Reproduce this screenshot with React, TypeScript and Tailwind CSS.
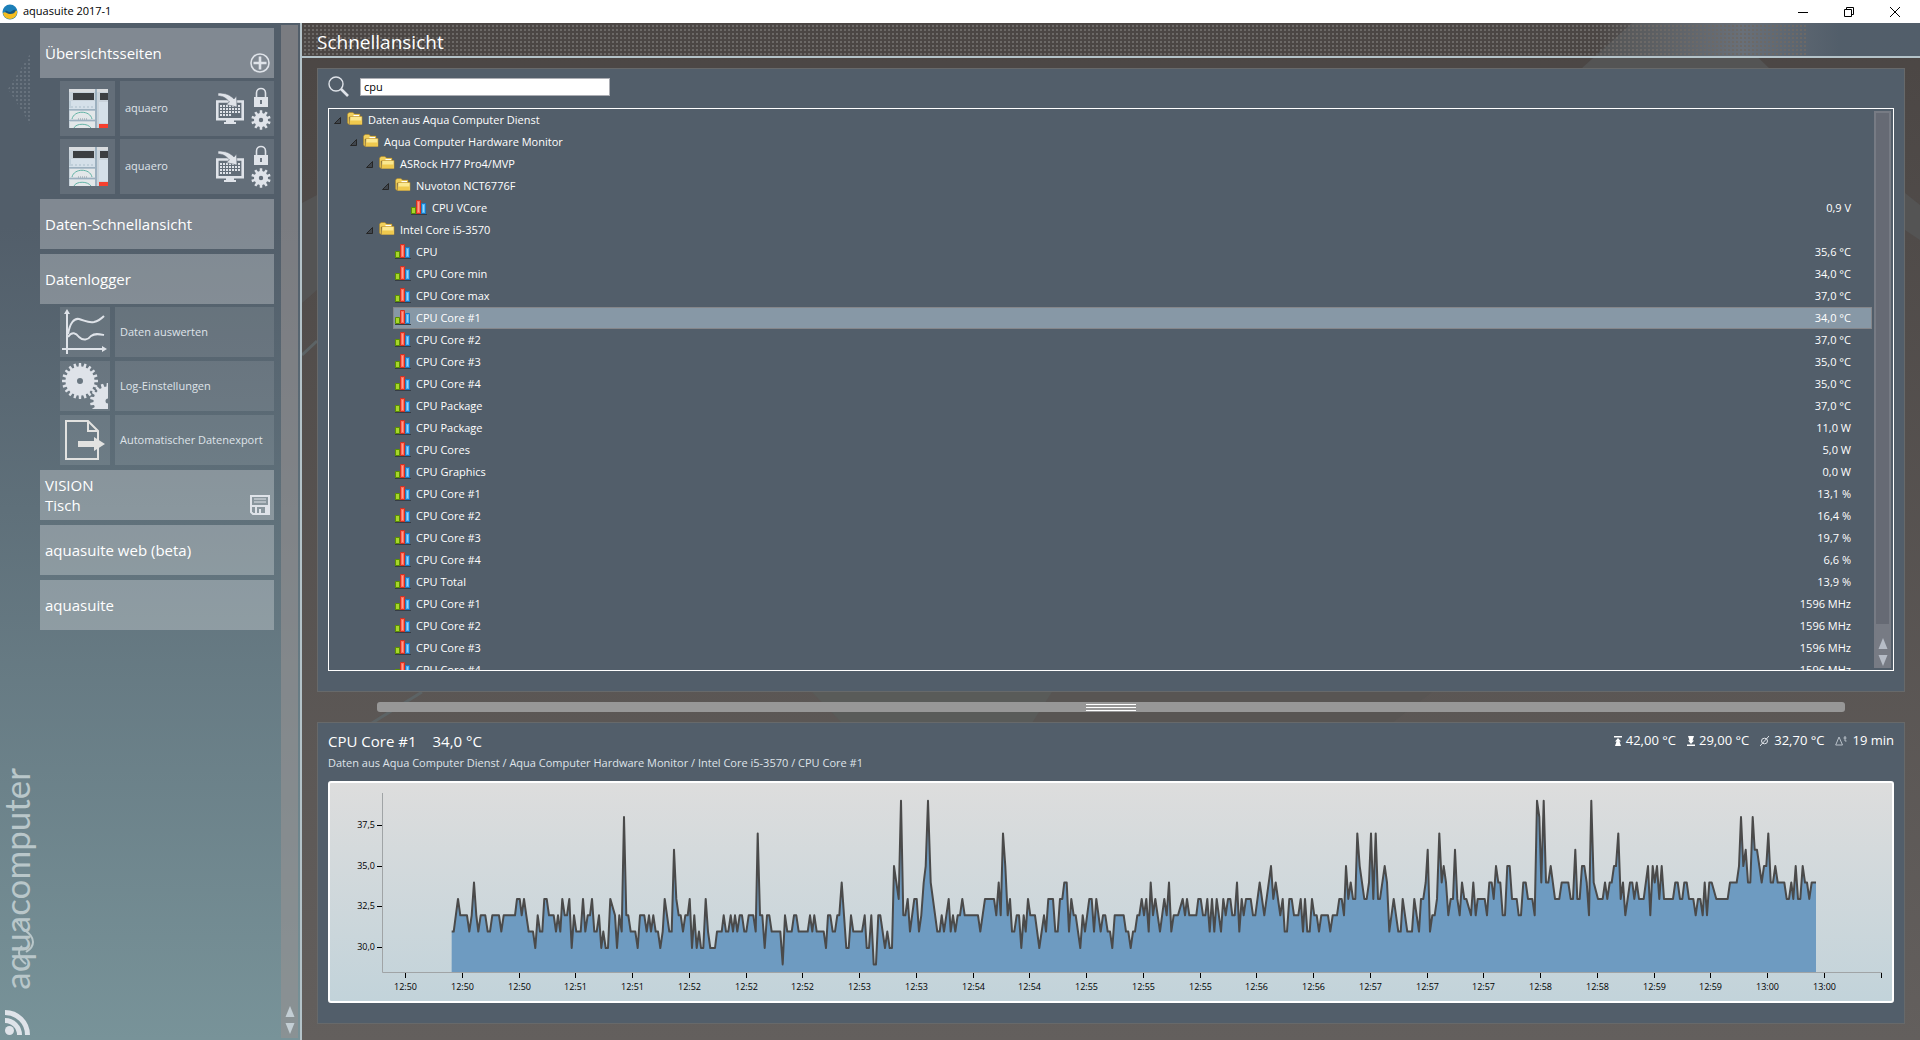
import { useState } from 'react';
import clsx from 'clsx';

interface TreeNode {
  level: number;
  name: string;
  value?: string;
}

const treeNodes: TreeNode[] = [
  { level: 0, name: 'Daten aus Aqua Computer Dienst' },
  { level: 1, name: 'Aqua Computer Hardware Monitor' },
  { level: 2, name: 'ASRock H77 Pro4/MVP' },
  { level: 3, name: 'Nuvoton NCT6776F' },
  { level: 4, name: 'CPU VCore', value: '0,9 V' },
  { level: 2, name: 'Intel Core i5-3570' },
  { level: 3, name: 'CPU', value: '35,6 °C' },
  { level: 3, name: 'CPU Core min', value: '34,0 °C' },
  { level: 3, name: 'CPU Core max', value: '37,0 °C' },
  { level: 3, name: 'CPU Core #1', value: '34,0 °C' },
  { level: 3, name: 'CPU Core #2', value: '37,0 °C' },
  { level: 3, name: 'CPU Core #3', value: '35,0 °C' },
  { level: 3, name: 'CPU Core #4', value: '35,0 °C' },
  { level: 3, name: 'CPU Package', value: '37,0 °C' },
  { level: 3, name: 'CPU Package', value: '11,0 W' },
  { level: 3, name: 'CPU Cores', value: '5,0 W' },
  { level: 3, name: 'CPU Graphics', value: '0,0 W' },
  { level: 3, name: 'CPU Core #1', value: '13,1 %' },
  { level: 3, name: 'CPU Core #2', value: '16,4 %' },
  { level: 3, name: 'CPU Core #3', value: '19,7 %' },
  { level: 3, name: 'CPU Core #4', value: '6,6 %' },
  { level: 3, name: 'CPU Total', value: '13,9 %' },
  { level: 3, name: 'CPU Core #1', value: '1596 MHz' },
  { level: 3, name: 'CPU Core #2', value: '1596 MHz' },
  { level: 3, name: 'CPU Core #3', value: '1596 MHz' },
  { level: 3, name: 'CPU Core #4', value: '1596 MHz' },
];

const indent = ['pl-0', 'pl-4', 'pl-8', 'pl-12', 'pl-16'];

// Recorded temperatures as "time:value" pairs, split in blocks with a start offset
const blocks = [
  {
    start: 0,
    points:
      '395:31 401:31 414:33 421:32 441:32 448:31 455:32 462:34 469:32 475:31 482:32 496:32 503:31 510:31 517:32 537:32 544:31 551:32 585:32 591:33 599:33 605:32 612:33 619:32 626:31 639:31 646:30 653:32 660:31 667:31 673:33 680:33 687:32 701:32 708:31 714:32 721:31 727:33 734:32 741:32 748:33 755:30 762:32 769:31 782:31 789:33 796:31 803:32 810:32 816:33 823:31 830:31 837:32 844:30 850:31 857:30 864:30 871:33 885:32 891:30 898:32 905:31 912:38 919:32 925:32 932:31 946:31 953:30 960:32 973:32 980:31 987:32 993:31 1000:32 1007:31 1014:31 1021:30 1028:31 1034:33 1048:31 1055:31 1062:36 1069:33 1076:32 1082:32 1089:31 1096:32 1103:32 1109:33 1116:30 1123:32 1130:30 1137:31 1143:30 1150:30 1157:33 1164:31 1171:30 1185:30 1191:31 1205:31 1211:32 1218:31 1225:31 1232:32 1239:31 1245:32 1252:31 1259:32',
  },
  {
    start: 1260,
    points:
      '6:32 13:31 19:31 26:32 40:32 47:31 53:37 60:32 67:32 74:30 81:32 88:32 95:31 121:31 128:29 135:32 142:31 155:31 162:32 169:32 176:31 203:31 210:32 217:31 223:32 230:31 251:31 258:30 264:32 271:32 278:31 285:31 292:32 298:32 305:34 312:32 319:30 326:30 333:32 340:31 366:31 374:32 380:30 387:30 394:32 401:29 408:29 415:32 421:32 435:30 442:31 449:30 456:30 462:35 476:33 483:39 490:32 496:32 503:33 510:31 523:33 530:33 537:31 544:32 551:34 557:35 564:39 572:34 592:31 599:31 605:32 612:31 626:33 632:31 639:32 646:31 653:32 660:32 667:33 674:32 714:32 721:31 735:33 762:33 769:32 776:34 782:32 789:37 796:35 803:32 810:33 816:31 823:31 830:32 837:32 844:30 851:32 857:31 864:33 871:32 885:32 898:30 912:32 918:31 925:33 939:33 946:31 953:31 960:33 967:33 973:34 980:34 987:31 994:33 1001:32 1007:32 1021:30 1028:32 1035:31 1048:33 1055:33 1062:31 1069:33 1082:31 1089:32 1096:32 1103:31 1110:31 1117:30 1124:32 1151:32 1158:31 1165:31 1172:30 1179:31 1185:31 1192:32 1198:32 1205:33 1212:32 1219:33 1226:31 1232:34 1239:32 1246:33',
  },
  {
    start: 2520,
    points:
      '0:31 13:33 20:32 27:34 34:31 41:32 54:32 68:33 75:32 81:33 88:32 109:32 115:33 122:33 129:32 136:32 142:33 149:31 156:33 163:31 170:33 183:31 190:33 197:32 204:33 211:33 217:32 224:32 231:34 238:31 245:33 251:32 258:33 272:33 279:32 286:32 299:34 313:32 333:35 340:33 347:34 361:32 368:33 374:31 381:31 388:33 395:33 402:32 415:32 422:33 429:31 435:33 442:31 449:31 456:33 463:32 470:32 477:31 484:32 504:32 511:31 518:32 531:32 538:33 545:33 552:32 558:35 565:33 572:34 579:33 586:33 592:37 599:35 613:33 620:33 627:34 633:37 640:33 647:37 654:33 660:33 674:35 681:34 688:31 701:33 715:31 722:31 728:33 742:31 756:31 763:33 777:31 783:33 790:33 797:34 803:36 810:31 817:32 824:32 831:33 838:37 845:34 851:35 858:34 865:32 872:33 879:33 885:36 892:33 899:32 906:34 913:33 919:33 933:32 940:34 947:32 953:33 974:33 981:32 988:34 995:34 1001:33 1008:35 1015:34 1021:34 1028:32 1035:32 1042:35 1049:35 1056:33 1070:33 1076:32 1083:32 1090:34 1097:34 1104:33 1117:33 1124:32 1131:39 1138:38 1144:34 1151:39 1158:34 1165:34 1172:35',
  },
  {
    start: 3660,
    points:
      '45:33 58:33 65:34 85:34 92:33 99:33 106:36 112:33 119:33 126:35 133:35 140:34 147:32 154:39 161:34 174:33 188:33 195:34 202:33 209:34 215:34 222:35 228:35 235:37 242:33 249:34 256:32 270:34 277:34 283:33 290:34 297:33 311:33 324:35 331:32 338:35 344:34 351:35 358:33 365:35 372:33 399:33 406:34 413:34 420:33 427:33 433:34 440:34 447:33 460:33 467:32 474:33 481:33 488:32 494:34 501:32 508:34 515:34 529:33 563:33 570:34 590:34 597:35 603:38 610:35 617:36 624:34 631:34 638:38 644:36 651:36 665:34 672:35 679:35 685:37 692:34 699:34 706:35 713:34 733:34 740:33 747:33 754:34 760:33 767:35 774:33 781:33 788:35 795:34 801:34 808:33 815:34 828:34',
  },
];

const BASELINE = 189;
const toX = (time: number) => time / 3 - 10;
const toY = (temp: number) => 165 - (temp - 30) * 16.37;

const samples = blocks.flatMap(({ start, points }) =>
  points.split(' ').map((pair) => {
    const [time, temp] = pair.split(':').map(Number);
    return { x: toX(start + time), y: toY(temp) };
  })
);
const linePoints = samples.map((s) => `${s.x.toFixed(1)},${s.y.toFixed(1)}`).join(' ');
const areaPoints = `${samples[0].x},${BASELINE} ${linePoints} ${samples[samples.length - 1].x},${BASELINE}`;

const yTicks = [
  { label: '37,5', y: 42 },
  { label: '35,0', y: 83 },
  { label: '32,5', y: 123 },
  { label: '30,0', y: 164 },
];

const timeLabels = [
  '12:50', '12:50', '12:50', '12:51', '12:51', '12:52', '12:52', '12:52', '12:53',
  '12:53', '12:54', '12:54', '12:55', '12:55', '12:55', '12:56', '12:56', '12:57',
  '12:57', '12:57', '12:58', '12:58', '12:59', '12:59', '13:00', '13:00', '',
];

function gearPath(cx: number, cy: number, teeth: number, outer: number, inner: number, hole: number) {
  const step = (Math.PI * 2) / teeth;
  const at = (r: number, a: number) => `${(cx + r * Math.cos(a)).toFixed(2)} ${(cy + r * Math.sin(a)).toFixed(2)}`;
  let d = '';
  for (let i = 0; i < teeth; i++) {
    const a = i * step - Math.PI / 2;
    d += `${i === 0 ? 'M' : 'L'}${at(inner, a - step * 0.3)}L${at(outer, a - step * 0.2)}L${at(outer, a + step * 0.2)}L${at(inner, a + step * 0.3)}`;
  }
  return `${d}Z M${cx - hole} ${cy}a${hole} ${hole} 0 1 0 ${hole * 2} 0a${hole} ${hole} 0 1 0 ${-hole * 2} 0Z`;
}

function AppLogo() {
  return (
    <svg className="w-4 h-4" viewBox="0 0 16 16">
      <circle cx="8" cy="8" r="7.5" fill="#1c7fb8" />
      <path d="M1 9c2-2 4 1 7 0s4-4 7-2c.6 4-2.500 8-7 8-4 0-6.500-3-7-6Z" fill="#f5bd20" />
      <path d="M3 7c2-1 3 1 5 1s3-3 6-2c-1 3-3 4-6 4-2 0-4-1-5-3Z" fill="#16577f" />
    </svg>
  );
}

function FolderIcon() {
  return (
    <svg className="w-4 h-4 shrink-0" viewBox="0 0 16 16">
      <path d="M.5 2 2 .5h4L7.500 2H13v3H2v7.500L.5 11Z" fill="#f0cf5c" stroke="#a97f1c" strokeWidth=".5" />
      <path d="M6.500 3H12v1.500H6.500Z" fill="#fff" />
      <path d="M3 4.500h12v8H2.500Z" fill="#fbe88f" stroke="#c1922a" strokeWidth=".6" />
      <path d="M3 8.500h11.700v3.700H3Z" fill="#efc94e" />
    </svg>
  );
}

function BarsIcon() {
  return (
    <svg className="w-4 h-4 shrink-0" viewBox="0 0 16 16">
      <path d="M0 14.500h16" stroke="#353c45" />
      <path d="M.5 7.500h4v6h-4Z" fill="#a7d62c" stroke="#5c8f00" />
      <path d="M5.500.5h4v13h-4Z" fill="#ff6f5c" stroke="#d8301f" />
      <path d="M7.500 2v10" stroke="#ff9d8e" />
      <path d="M10.500 3.500h4v10h-4Z" fill="#55b6f2" stroke="#1878c4" />
      <path d="M12.500 5v7" stroke="#93d4fb" />
    </svg>
  );
}

function ScrollArrows() {
  return (
    <svg className="w-[10px] h-7" viewBox="0 0 10 28" fill="currentColor">
      <path d="M5 0 9.500 11H.5Z" />
      <path d="M5 28 .5 17h9Z" />
    </svg>
  );
}

function PageThumbnail() {
  return (
    <svg className="w-[39px] h-[39px]" viewBox="0 0 39 39">
      <path d="M0 0h39v39H0Z" fill="#c9d3db" />
      <path d="M0 0h39v3H0Z" fill="#d9dcdf" />
      <path d="M4 4h21v7H4ZM31 4h8v7h-8Z" fill="#3c3f42" />
      <path d="M0 12h26v9H0ZM30 13h9v21h-9Z" fill="#d5e0e9" />
      <path d="M26 0h2v39h-2ZM0 20h26v1.500H0ZM0 31h26v1H0Z" fill="#9cb0bf" />
      <path d="M1 22h25v8H1ZM1 33h25v6H1Z" fill="#e3e7e9" />
      <path d="M3 30c2-9 18-9 20 0M5 39c2-5 14-5 17 0" fill="none" stroke="#63b3a6" />
      <path d="M9 30h9" stroke="#8c9aa4" strokeDasharray="1 1" />
      <path d="M1 12v7M3 17v2M7 17v2M11 17v2M15 17v2M19 17v2M23 17v2" stroke="#9cb0bf" strokeWidth=".7" />
      <path d="M30 35h9v4h-9Z" fill="#f5402f" />
    </svg>
  );
}

function DesktopIcon() {
  return (
    <svg className="w-7 h-8" viewBox="0 0 28 32">
      <path d="M1.300 8.500h25.400v17.700H1.300Z" fill="none" stroke="#dfe3e9" strokeWidth="2.600" />
      <path d="M10 26h8v3h2v2H8v-2h2Z" fill="#dfe3e9" />
      <path d="M4 13h20M4 16h20M4 19h20M4 22h12" stroke="#dfe3e9" strokeWidth="2" strokeDasharray="2 1" />
      <path d="M2 0c8 0 12 2 16 6l2.500-3 .5 11-11-2.500L13.500 9C10 5 7 3 2 3Z" fill="#dfe3e9" stroke="#646f7b" strokeWidth=".6" />
    </svg>
  );
}

function LockIcon() {
  return (
    <svg className="w-4 h-5" viewBox="0 0 16 20">
      <path d="M3.500 10V6c0-6 9-6 9 0v4" fill="none" stroke="#dfe3e9" strokeWidth="1.600" />
      <path d="M1 10h14v10H1Z" fill="#dfe3e9" />
      <path d="M8 13v4" stroke="#5f6975" strokeWidth="1.800" />
    </svg>
  );
}

function GearIcon() {
  return (
    <svg className="w-5 h-5" viewBox="0 0 20 20">
      <path d={gearPath(10, 10, 10, 9.8, 7, 2.2)} fill="#dfe3e9" fillRule="evenodd" />
    </svg>
  );
}

function CurvesIcon() {
  return (
    <svg className="w-[46px] h-[46px]" viewBox="0 0 46 46" fill="none" stroke="#dfe3e9" strokeWidth="2">
      <path d="M5 45V4M0 40h42" />
      <path d="M5 0 8 5H2ZM45 40l-5-3v6Z" fill="#dfe3e9" stroke="none" />
      <path d="M6 25C8 14 12 9 17 10c7 2 9 4 15 3 5-1 7-3 10-6" />
      <path d="M6 28c4-6 8-4 11 0 4 4 9 3 12-1 4-3 8-2 13-1" />
    </svg>
  );
}

function GearsIcon() {
  return (
    <svg className="w-[46px] h-[46px]" viewBox="0 0 46 46" fill="#dfe3e9" fillRule="evenodd">
      <path d={gearPath(18, 18, 20, 18, 14.5, 3)} />
      <path d={gearPath(46, 38, 18, 18, 14.5, 2.5)} />
    </svg>
  );
}

function ExportIcon() {
  return (
    <svg className="w-[46px] h-[46px]" viewBox="0 0 46 46">
      <path d="M4 4h22l10 10v28H4ZM26 4v10h10" fill="none" stroke="#e2e2e0" strokeWidth="2" />
      <path d="M16 24h16v-4l11 7-11 7v-4H16Z" fill="#e2e2e0" />
    </svg>
  );
}

function SaveIcon() {
  return (
    <svg className="w-5 h-5" viewBox="0 0 20 20">
      <path d="M1 1h18v18H3l-2-2Z" fill="none" stroke="#dfe3e9" strokeWidth="2" />
      <path d="M2 10h16v2H2ZM5 12h2v7H5ZM9 14h2v4H9ZM15 12h3v7h-3Z" fill="#dfe3e9" />
      <path d="M4 4h12M4 7h12" stroke="#dfe3e9" />
    </svg>
  );
}

function NavItem({ children, action }: { children: React.ReactNode; action?: React.ReactNode }) {
  return (
    <div className="h-[50px] flex bg-white/27 text-white">
      <button className="flex-1 pl-[5px] pb-px text-left text-[15px] leading-5">{children}</button>
      {action && <div className="self-end flex pr-1 pb-[5px]">{action}</div>}
    </div>
  );
}

function OverviewPage() {
  return (
    <div className="h-[55px] ml-5 flex gap-[5px]">
      <div className="w-[55px] shrink-0 flex items-center justify-center pl-0.5 bg-white/10">
        <PageThumbnail />
      </div>
      <div className="flex-1 flex items-center pl-[5px] pr-[3px] bg-white/10">
        <button className="flex-1 h-full text-left text-[11px] text-[#dfe3e9]">aquaero</button>
        <button className="mr-[7px]" aria-label="Desktop">
          <DesktopIcon />
        </button>
        <div className="flex flex-col items-center gap-[3px]">
          <button aria-label="Sperren"><LockIcon /></button>
          <button aria-label="Einstellungen"><GearIcon /></button>
        </div>
      </div>
    </div>
  );
}

function LoggerItem({ icon, label }: { icon: React.ReactNode; label: string }) {
  return (
    <button className="h-[50px] ml-5 flex gap-[5px] text-left text-[11px] text-[#dfe3e9]">
      <span className="w-[50px] h-full shrink-0 flex items-center justify-center bg-white/10">{icon}</span>
      <span className="flex-1 h-full flex items-center pl-[5px] bg-white/10 whitespace-nowrap">{label}</span>
    </button>
  );
}

function Sidebar() {
  return (
    <aside className="w-[302px] shrink-0 flex border-r-2 border-[#b4c3c9] bg-linear-to-b from-[#525e6a] from-20% to-[#789399]">
      <div className="w-10 shrink-0 flex flex-col justify-between pt-7 pb-[5px]">
        <svg className="w-6 h-[76px] ml-2" viewBox="0 0 24 76">
          <defs>
            <pattern id="arrowDots" width="4" height="4" patternUnits="userSpaceOnUse">
              <path d="M0 0h2v2H0Z" fill="#67727d" />
            </pattern>
          </defs>
          <path d="M0 38 24 0v76Z" fill="url(#arrowDots)" />
        </svg>
        <div className="flex flex-col gap-5">
          <div className="relative self-start">
            <span className="block [writing-mode:vertical-rl] rotate-180 font-[Lato,sans-serif] text-[35px] leading-8 text-[#b9c7ca]">
              aquacomputer
            </span>
            {/* Swash joining the letters of the brand name */}
            <svg className="absolute left-0 bottom-0 w-9 h-[90px]" viewBox="0 0 36 90" fill="none" stroke="#b9c7ca" strokeWidth="2">
              <path d="M26 64C20 60 16 52 22 46M16 20c4 10 17 12 17 22 0 6-4 8-7 10" />
            </svg>
          </div>
          <svg className="w-[25px] h-[25px] ml-[5px]" viewBox="0 0 25 25">
            <circle cx="4.500" cy="20.500" r="4.500" fill="#dfe3e9" />
            <path d="M0 10.500A14.500 14.500 0 0 1 14.500 25M0 2.500A22.500 22.500 0 0 1 22.500 25" fill="none" stroke="#dfe3e9" strokeWidth="5" />
          </svg>
        </div>
      </div>
      <nav className="flex-1 flex flex-col gap-[5px] pt-[5px]">
        <NavItem
          action={
            <button aria-label="Hinzufügen">
              <svg className="w-5 h-5" viewBox="0 0 20 20" fill="none" stroke="#dfe3e9">
                <circle cx="10" cy="10" r="9" strokeWidth="1.600" />
                <path d="M10 3.500v13M3.500 10h13" strokeWidth="2.600" />
              </svg>
            </button>
          }
        >
          Übersichtsseiten
        </NavItem>
        <div className="flex flex-col gap-[3px] -mt-0.5">
          <OverviewPage />
          <OverviewPage />
        </div>
        <NavItem>Daten-Schnellansicht</NavItem>
        <NavItem>Datenlogger</NavItem>
        <div className="flex flex-col gap-1 -mt-0.5">
          <LoggerItem icon={<CurvesIcon />} label="Daten auswerten" />
          <LoggerItem icon={<GearsIcon />} label="Log-Einstellungen" />
          <LoggerItem icon={<ExportIcon />} label="Automatischer Datenexport" />
        </div>
        <NavItem action={<button aria-label="Speichern"><SaveIcon /></button>}>
          VISION
          <br />
          Tisch
        </NavItem>
        <NavItem>aquasuite web (beta)</NavItem>
        <NavItem>aquasuite</NavItem>
      </nav>
      <div className="w-[17px] ml-[7px] mr-0.5 mt-0.5 mb-0.5 flex items-end justify-center pb-1 bg-[#969191]/60 text-[#c3ced4]">
        <ScrollArrows />
      </div>
    </aside>
  );
}

function TreeRow({ node, selected, onSelect }: { node: TreeNode; selected: boolean; onSelect: () => void }) {
  return (
    <li className={clsx('flex h-[22px]', indent[node.level])}>
      <span className="w-4 shrink-0 flex items-center pl-[5px]">
        {!node.value && (
          <svg className="w-[7px] h-[7px]" viewBox="0 0 7 7">
            <path d="M6.500.5v6h-6Z" fill="#40464d" stroke="#262626" />
          </svg>
        )}
      </span>
      <button
        onClick={onSelect}
        className={clsx(
          'flex-1 flex items-center gap-[5px] pl-px pr-5 border text-left text-[11px] text-white',
          selected ? 'bg-[#8798a6] border-[#85868a]' : 'border-transparent'
        )}
      >
        {node.value ? <BarsIcon /> : <FolderIcon />}
        <span className="flex-1">{node.name}</span>
        <span>{node.value}</span>
      </button>
    </li>
  );
}

function HistoryChart() {
  return (
    <div className="border-2 border-white rounded-[3px] bg-linear-to-b from-[#dddddd] to-[#c2d3da]">
      <svg className="block w-full" viewBox="0 0 1562 218" fontSize="9" fill="#000">
        <polygon points={areaPoints} fill="#6e9bc1" />
        <polyline points={linePoints} fill="none" stroke="#4a4a4a" strokeWidth="2" strokeLinejoin="round" />
        <path d="M52.500 10v179.500H1552" fill="none" stroke="#a0a4a6" />
        {yTicks.map((tick) => (
          <g key={tick.label}>
            <path d={`M47 ${tick.y + 0.5}h5`} stroke="#000" />
            <text x="45" y={tick.y + 3} textAnchor="end">{tick.label}</text>
          </g>
        ))}
        {timeLabels.map((label, i) => {
          const x = Math.round(75 + i * 56.75) + 0.5;
          return (
            <g key={i}>
              <path d={`M${x} 190v5`} stroke="#000" />
              <text x={x} y="207" textAnchor="middle">{label}</text>
            </g>
          );
        })}
      </svg>
    </div>
  );
}

function Stats() {
  return (
    <div className="flex items-center gap-[11px] text-[13px] text-white">
      <span className="flex items-center gap-1">
        <svg className="w-2 h-[10px]" viewBox="0 0 8 10" fill="#fff">
          <path d="M0 0h8v1.500H0ZM4 2l3 3.500H5.500L7 10H1l1.500-4.500H1Z" />
        </svg>
        42,00 °C
      </span>
      <span className="flex items-center gap-1">
        <svg className="w-2 h-[10px]" viewBox="0 0 8 10" fill="#fff">
          <path d="M0 8.500h8V10H0ZM4 8 1 4.500h1.500L1 0h6L5.500 4.500H7Z" />
        </svg>
        29,00 °C
      </span>
      <span className="flex items-center gap-[5px]">
        <svg className="w-[9px] h-[10px]" viewBox="0 0 9 10" fill="none" stroke="#dfe3e9">
          <ellipse cx="4.500" cy="5" rx="3" ry="2.800" />
          <path d="M0 10 9 0" />
        </svg>
        32,70 °C
      </span>
      <span className="flex items-center gap-[5px]">
        <svg className="w-3 h-[10px]" viewBox="0 0 12 10" fill="none" stroke="#b9c1c9">
          <path d="M4 1 7.500 9H.7ZM10 0v5h1.500M8.500 2h3" />
        </svg>
        19 min
      </span>
    </div>
  );
}

export default function App() {
  const [query, setQuery] = useState('cpu');
  const [selected, setSelected] = useState(9);

  return (
    <div className="h-screen flex flex-col overflow-hidden font-['Open_Sans','Noto_Sans',sans-serif]">
      {/* Title bar */}
      <header className="h-[23px] shrink-0 flex items-center pl-0.5 pr-5 bg-white text-black">
        <AppLogo />
        <span className="flex-1 pl-[5px] text-[11px]">aquasuite 2017-1</span>
        <div className="flex gap-9">
          <button aria-label="Minimieren">
            <svg className="w-[10px] h-[10px]" viewBox="0 0 10 10" stroke="#000"><path d="M0 5.500h10" /></svg>
          </button>
          <button aria-label="Verkleinern">
            <svg className="w-[10px] h-[10px]" viewBox="0 0 10 10" stroke="#000" fill="none">
              <path d="M.5 2.500h7v7h-7ZM2.500 2.500v-2h7v7h-2" />
            </svg>
          </button>
          <button aria-label="Schließen">
            <svg className="w-[10px] h-[10px]" viewBox="0 0 10 10" stroke="#000"><path d="m0 0 10 10M10 0 0 10" /></svg>
          </button>
        </div>
      </header>

      <div className="flex-1 min-h-0 flex">
        <Sidebar />

        <main className="relative flex-1 min-w-0 flex flex-col bg-linear-to-b from-[#4b4644] to-[#635f5d]">
          {/* Backdrop artwork */}
          <svg className="absolute inset-0 w-full h-full" viewBox="0 0 1618 1017" preserveAspectRatio="none">
            <path d="M0 180 15 172v95L0 280ZM1330 0h90l47 45h-187ZM1603 170l15 12v35l-15-10Z" fill="#545454" />
            <path d="M510 669h240l60 31H540Z" fill="#595b59" />
            <path d="M750 669h380l-40 31H730Z" fill="#585553" />
            <path d="m70 700 50-31M0 332l15-14" stroke="#5c6365" strokeWidth="3" />
          </svg>

          {/* Page header */}
          <div className="relative h-[35px] shrink-0 flex items-center pl-[15px] pt-1 border-b-2 border-[#b4c3c9]">
            <div className="absolute inset-0 bg-linear-to-r from-transparent from-80% via-[#697079] via-89% to-[#525e6a] to-95%" />
            <svg className="absolute inset-0 w-full h-full">
              <defs>
                <pattern id="headDots" x="2" y="2" width="4" height="4" patternUnits="userSpaceOnUse">
                  <path d="M0 0h2v2H0Z" fill="#6c6967" />
                </pattern>
              </defs>
              <rect width="93%" height="100%" fill="url(#headDots)" />
            </svg>
            <h1 className="relative text-[19px] leading-6 text-white">Schnellansicht</h1>
          </div>

          <div className="relative flex-1 min-h-0 flex flex-col pl-[15px] pr-[15px] pt-[10px] pb-4">
            {/* Sensor tree */}
            <section className="flex-1 min-h-0 flex flex-col px-[10px] pb-5 border border-[#67696a] bg-[#525e6a]">
              <div className="h-[39px] shrink-0 flex items-center gap-[11px] pb-1">
                <label htmlFor="search" aria-label="Suche">
                  <svg className="w-[21px] h-[21px]" viewBox="0 0 21 21" fill="none" stroke="#dfe3e9">
                    <circle cx="8" cy="8" r="7" strokeWidth="1.400" />
                    <path d="m13 13 7 7" strokeWidth="2.600" />
                  </svg>
                </label>
                <input
                  id="search"
                  value={query}
                  onChange={(e) => setQuery(e.target.value)}
                  className="w-[250px] h-[18px] px-[3px] bg-white border border-[#abadb3] text-[11px] text-black outline-none"
                />
              </div>
              <div className="flex-1 min-h-0 flex border border-white">
                <ul className="flex-1 min-w-0 overflow-hidden">
                  {treeNodes.map((node, i) => (
                    <TreeRow key={i} node={node} selected={i === selected} onSelect={() => setSelected(i)} />
                  ))}
                </ul>
                <div className="w-[17px] m-0.5 flex flex-col items-center p-0.5 bg-[#777b84] text-[#b6bcc6]">
                  <div className="w-full flex-1 mb-[14px] bg-[#666a74]" />
                  <ScrollArrows />
                </div>
              </div>
            </section>

            {/* Splitter */}
            <div className="h-[10px] shrink-0 mx-[60px] my-[10px] flex flex-col items-center justify-center gap-0.5 rounded-[3px] bg-[#979797]">
              <span className="w-[50px] h-px bg-white" />
              <span className="w-[50px] h-px bg-white" />
              <span className="w-[50px] h-px bg-white" />
            </div>

            {/* History of the selected sensor */}
            <section className="shrink-0 px-[10px] pt-1.5 pb-5 border border-[#67696a] bg-[#525e6a]">
              <div className="h-6 flex items-center justify-between">
                <h2 className="flex gap-4 text-[15px] text-white">
                  <span>CPU Core #1</span>
                  <span>34,0 °C</span>
                </h2>
                <Stats />
              </div>
              <p className="h-5 mb-2 text-[11px] leading-5 text-[#dfe3e9]">
                Daten aus Aqua Computer Dienst / Aqua Computer Hardware Monitor / Intel Core i5-3570 / CPU Core #1
              </p>
              <HistoryChart />
            </section>
          </div>
        </main>
      </div>
    </div>
  );
}
